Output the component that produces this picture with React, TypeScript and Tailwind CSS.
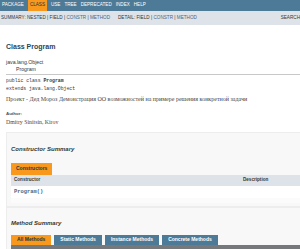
const sans = "font-['Liberation_Sans','DejaVu_Sans',Arial,sans-serif]"
const serif = "font-['Liberation_Serif','Times_New_Roman',serif]"
const mono = "font-['Liberation_Mono','DejaVu_Sans_Mono',monospace]"

const NAV = ['Package', 'Class', 'Use', 'Tree', 'Deprecated', 'Index', 'Help']

function TopNav() {
  return (
    <div className={`flex h-[11px] items-stretch bg-[#4d7a97] pl-[2px] text-[4.6px] font-medium uppercase text-white ${sans}`}>
      {NAV.map((item) => (
        <div
          key={item}
          className={
            item === 'Class'
              ? 'mr-[4px] flex items-center bg-[#f8981d] px-[2px] text-[#253441]'
              : 'mr-[4px] flex items-center'
          }
        >
          {item}
        </div>
      ))}
    </div>
  )
}

function SubNav() {
  const link = 'text-[#4a6782]'
  return (
    <div className={`flex h-[14px] items-center bg-[#dee3e9] text-[4.65px] text-[#353833] ${sans}`}>
      <div className="pl-[1px]">
        SUMMARY: NESTED | FIELD | <span className={link}>CONSTR</span> | <span className={link}>METHOD</span>
      </div>
      <div className="ml-[8px]">
        DETAIL: FIELD | <span className={link}>CONSTR</span> | <span className={link}>METHOD</span>
      </div>
      <div className="ml-auto">SEARCH</div>
    </div>
  )
}

function Tab({ label, active }: { label: string; active?: boolean }) {
  return (
    <div
      className={
        active
          ? 'flex h-[10px] items-center bg-[#f8981d] px-[6px] font-bold text-[#253441]'
          : 'flex h-[10px] items-center bg-[#4d7a97] px-[6px] font-bold text-white'
      }
    >
      {label}
    </div>
  )
}

export default function App() {
  return (
    <div className="h-[249px] w-[300px] overflow-hidden bg-white">
      <TopNav />
      <SubNav />

      <div className="pl-[6px]">
        <h2 className={`mt-[18px] text-[7px] font-bold leading-[8px] text-[#2c4557] ${sans}`}>Class Program</h2>

        <div className={`mt-[8px] text-[5.2px] leading-[6.5px] text-[#353833] ${sans}`}>
          <div>java.lang.Object</div>
          <div className="pl-[10px]">Program</div>
        </div>

        <div className="mt-[2px] h-px bg-[#c8c8c8]" />

        <div className={`mt-[2px] text-[4.8px] leading-[8px] text-[#353833] ${mono}`}>
          <div>
            public class <span className="font-bold">Program</span>
          </div>
          <div>extends java.lang.Object</div>
        </div>

        <p className={`mt-[3px] text-[6px] leading-[7px] text-[#474747] ${serif}`}>
          Проект - Дед Мороз Демонстрация ОО возможностей на примере решения конкретной задачи
        </p>

        <div className={`mt-[8px] text-[4.4px] font-bold leading-[6px] text-[#4e4e4e] ${sans}`}>Author:</div>
        <div className={`mt-[2px] text-[5.8px] leading-[7px] text-[#474747] ${serif}`}>Dmitry Sinitsin, Kirov</div>

        <div className={`mt-[6px] border border-r-0 border-[#ededed] bg-[#f8f8f8] pb-[3px] pl-[4px] ${sans}`}>
          <h3 className="mt-[13px] text-[6px] font-bold italic leading-[7px] text-[#353833]">Constructor Summary</h3>
          <div className="mt-[10px] flex text-[5px]">
            <div className="flex h-[12px] items-center bg-[#f8981d] px-[5px] font-bold text-[#253441]">Constructors</div>
          </div>
          <div className="flex h-[11px] items-center bg-[#dee3e9] pl-[3px] text-[4.6px] font-bold text-[#353833]">
            <span className="w-[229px]">Constructor</span>
            <span>Description</span>
          </div>
          <div className={`flex h-[12px] items-center bg-white pl-[3px] text-[5.4px] font-bold text-[#4a6782] ${mono}`}>
            Program()
          </div>
          <div className="h-[5px] bg-[#fbfbfb]" />
        </div>

        <div className={`border border-r-0 border-[#ededed] bg-[#f8f8f8] pl-[4px] ${sans}`}>
          <h3 className="mt-[12px] text-[6px] font-bold italic leading-[7px] text-[#353833]">Method Summary</h3>
          <div className="mt-[8px] flex gap-[3px] text-[5px]">
            <Tab label="All Methods" active />
            <Tab label="Static Methods" />
            <Tab label="Instance Methods" />
            <Tab label="Concrete Methods" />
          </div>
          <div className="h-[6px] bg-[#76797c]" />
        </div>
      </div>
    </div>
  )
}
